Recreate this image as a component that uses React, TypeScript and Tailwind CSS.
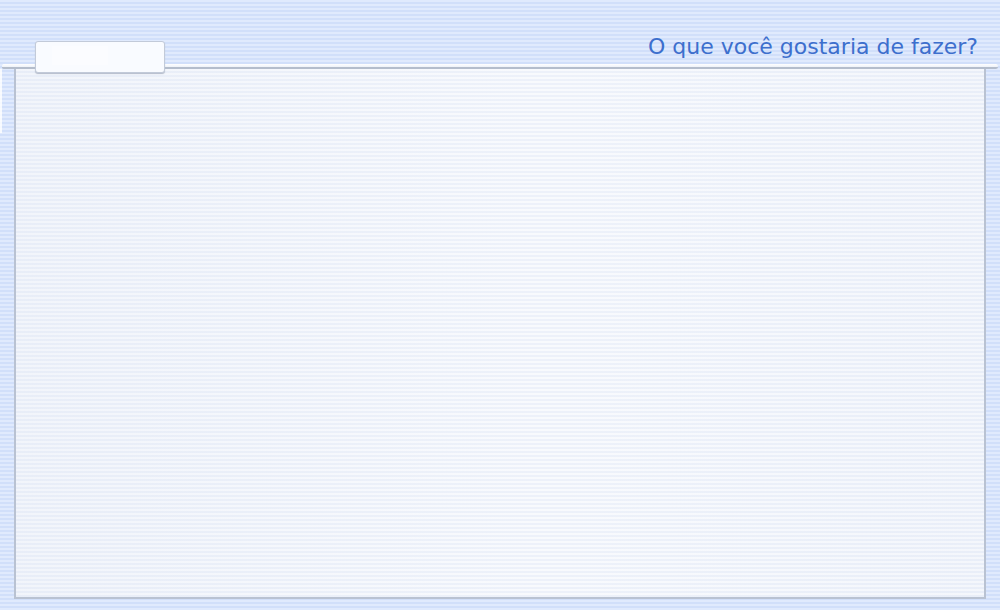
export default function App() {
  return (
    <div className="relative w-[1000px] h-[610px] flex flex-col overflow-hidden bg-[repeating-linear-gradient(to_bottom,#e0eafd_0px,#e0eafd_2px,#d1dffa_2px,#d1dffa_4px)] font-['DejaVu_Sans',Verdana,sans-serif]">
      {/* cabeçalho */}
      <div className="h-[64px] flex items-end justify-end pr-[22px] pb-[4px]">
        <span className="text-[22px] leading-[26px] text-[#3d6fcd]">O que você gostaria de fazer?</span>
      </div>

      {/* barra */}
      <div className="h-[5px] mx-[2px] rounded-l-[3px] rounded-r-[4px] bg-[linear-gradient(to_bottom,#ffffff,#edf1f8)] border-b-2 border-[#b4bdcc]" />

      {/* painel */}
      <div className="flex-1 flex mb-[11px]">
        <div className="w-[14px] shrink-0">
          <div className="w-[2px] h-[64px] bg-white/80" />
        </div>
        <div className="flex-1 mr-[14px] border-l-2 border-r-2 border-b-2 border-[#b9c2d2] bg-[linear-gradient(to_right,rgba(226,232,244,0.25),rgba(255,255,255,0.15)_55%,rgba(226,232,244,0.15)),repeating-linear-gradient(to_bottom,#f7f9fd_0px,#f7f9fd_2px,#eaeff9_2px,#eaeff9_4px)]" />
      </div>

      {/* aba */}
      <div className="absolute left-[35px] top-[41px] w-[130px] h-[32px] rounded-[3px] border border-[#c2cad9] bg-[#f9fbff] shadow-[0_1px_1px_#b4bccb]">
        <div className="ml-[16px] mt-[4px] w-[56px] h-[19px] bg-white/40" />
      </div>
    </div>
  );
}
